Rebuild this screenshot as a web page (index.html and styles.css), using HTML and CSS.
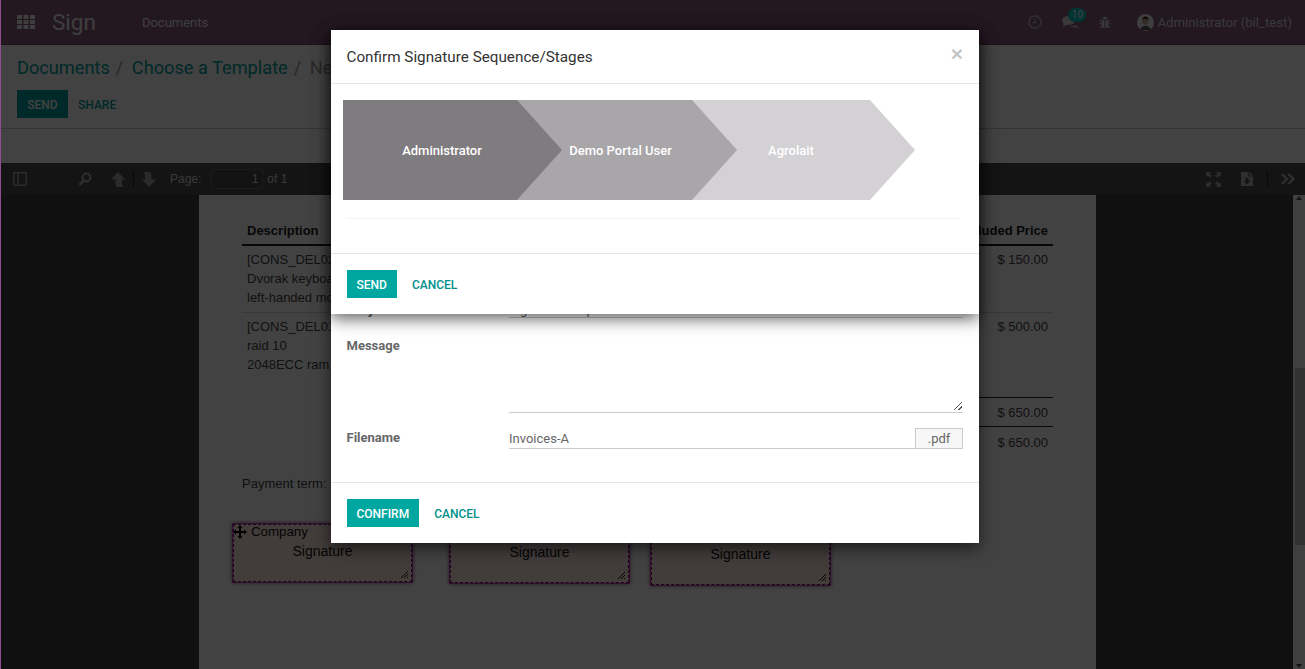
FILE: index.html
```html
<!DOCTYPE html>
<html lang="en">
<head>
    <meta charset="UTF-8">
    <title>Sign</title>
    <link rel="stylesheet" href="styles.css">
</head>
<body>
    <nav class="navbar">
        <svg class="apps-icon" width="18" height="14" viewBox="0 0 18 14">
            <rect x="0" y="0" width="5" height="4"/><rect x="6.5" y="0" width="5" height="4"/><rect x="13" y="0" width="5" height="4"/>
            <rect x="0" y="5" width="5" height="4"/><rect x="6.5" y="5" width="5" height="4"/><rect x="13" y="5" width="5" height="4"/>
            <rect x="0" y="10" width="5" height="4"/><rect x="6.5" y="10" width="5" height="4"/><rect x="13" y="10" width="5" height="4"/>
        </svg>
        <span class="brand">Sign</span>
        <span class="nav-link">Documents</span>
        <div class="nav-right">
            <svg class="nav-icon" width="14" height="14" viewBox="0 0 14 14"><circle cx="7" cy="7" r="6" fill="none" stroke="#bbb" stroke-width="1.4"/><path d="M7.4 3.5V7.6H4.6" fill="none" stroke="#bbb" stroke-width="1.2"/></svg>
            <div class="chat">
                <svg width="17" height="14" viewBox="0 0 17 14"><ellipse cx="6.5" cy="5.5" rx="6.5" ry="4.5" fill="#ddd"/><path d="M2 8L1 12L6 9Z" fill="#ddd"/><path d="M8 11.2c3 .4 5-.2 6-1.5l2.500 3.300-4-.9c-1.500.2-3.500 0-4.500-.9Z" fill="#ddd"/></svg>
                <span class="badge">10</span>
            </div>
            <svg class="nav-icon" width="12" height="13" viewBox="0 0 12 13"><path d="M3.500 3.500C3.500 1.800 4.600.8 6 .8S8.500 1.800 8.500 3.500ZM3 4.500H5.500V12.400C4 12.200 3 10.800 3 9ZM6.500 4.500H9V9C9 10.800 8 12.200 6.500 12.400Z" fill="#ddd"/><path d="M3 5.500L.8 3.800M9 5.500L11.200 3.800M3 7.800H.3M9 7.800H11.700M3.300 10L1 12M8.700 10L11 12" stroke="#ddd" stroke-width="1.100"/></svg>
            <div class="user">
                <svg width="17" height="17" viewBox="0 0 17 17"><circle cx="8.500" cy="8.500" r="8.500" fill="#f0f0f0"/><ellipse cx="8.500" cy="6.800" rx="3" ry="4" fill="#c9a48c"/><path d="M5.400 6C5.400 3.500 6.800 2.500 8.500 2.500S11.600 3.500 11.600 6C10.500 4.600 6.500 4.600 5.400 6Z" fill="#3a2c24"/><path d="M3.500 16C4 12.800 6 11.800 8.500 11.800S13 12.800 13.500 16Z" fill="#555"/></svg>
                <span>Administrator (bil_test)</span>
            </div>
        </div>
    </nav>

    <div class="control-panel">
        <ol class="breadcrumb">
            <li><a>Documents</a></li>
            <li class="sep">/</li>
            <li><a>Choose a Template</a></li>
            <li class="sep">/</li>
            <li class="current">New Document</li>
        </ol>
        <div class="cp-buttons">
            <button class="btn-primary btn-send">SEND</button>
            <button class="btn-link btn-share">SHARE</button>
        </div>
    </div>
    <div class="panel-spacer"></div>

    <div class="pdf-toolbar">
        <svg class="tb-icon tb-sidebar" width="14" height="14" viewBox="0 0 14 14"><path d="M.8.8H13.200V13.200H.8ZM5 .8V13.200" fill="none" stroke="#aaa" stroke-width="1.500"/></svg>
        <svg class="tb-icon tb-search" width="14" height="14" viewBox="0 0 14 14"><circle cx="8.500" cy="5.500" r="3.900" fill="none" stroke="#b4b4b4" stroke-width="2"/><path d="M5.600 8.500L1.500 12.800" stroke="#b4b4b4" stroke-width="2.600"/></svg>
        <svg class="tb-icon tb-up" width="14" height="15" viewBox="0 0 14 15"><path d="M7 0L14 7.500H11C10.500 10 11 12.500 12 15H5.500C4.500 12.500 4.300 10 4.500 7.500H0Z" fill="#a8a8a8"/></svg>
        <span class="tb-divider"></span>
        <svg class="tb-icon tb-down" width="14" height="15" viewBox="0 0 14 15"><path d="M2 0H8.500C9.500 2.500 9.700 5 9.500 7.500H14L7 15L0 7.500H3C3.500 5 3 2.500 2 0Z" fill="#a8a8a8"/></svg>
        <span class="tb-label tb-page">Page:</span>
        <span class="tb-input">1</span>
        <span class="tb-label">of 1</span>
        <div class="tb-right">
            <svg class="tb-icon" width="15" height="15" viewBox="0 0 15 15"><path d="M0 0H5L3.500 1.500L5.800 3.800L3.800 5.800L1.500 3.500L0 5ZM15 0V5L13.500 3.500L11.200 5.800L9.200 3.800L11.500 1.500L10 0ZM0 15V10L1.500 11.500L3.800 9.200L5.800 11.200L3.500 13.500L5 15ZM15 15H10L11.500 13.500L9.200 11.200L11.200 9.200L13.500 11.500L15 10Z" fill="#aaa"/></svg>
            <svg class="tb-icon tb-save" width="12" height="14" viewBox="0 0 12 14"><path d="M0 0H7.500V4.500H12V14H0ZM8.500 0L12 3.500H8.500Z" fill="#b4b4b4"/><path d="M4.500 6H7.500V8.800H9.500L6 12.200L2.500 8.800H4.500Z" fill="#4f4f4f"/></svg>
            <span class="tb-divider tb-divider-right"></span>
            <svg class="tb-icon" width="14" height="12" viewBox="0 0 14 12"><path d="M1 1L6 6L1 11M7.500 1L12.500 6L7.500 11" fill="none" stroke="#b4b4b4" stroke-width="2.400"/></svg>
        </div>
    </div>

    <div class="viewer">
        <div class="pdf-page">
            <div class="pdf-row pdf-head">
                <span>Description</span>
                <span>Tax Included Price</span>
            </div>
            <div class="pdf-row pdf-line">
                <span>[CONS_DEL02] Server<br>Dvorak keyboard<br>left-handed mouse</span>
                <span>$ 150.00</span>
            </div>
            <div class="pdf-row pdf-line pdf-line-last">
                <span>[CONS_DEL01] Server<br>raid 10<br>2048ECC ram</span>
                <span>$ 500.00</span>
            </div>
            <div class="pdf-total">$ 650.00</div>
            <div class="pdf-total">$ 650.00</div>
            <p class="pdf-term">Payment term: 15 Days</p>

            <div class="sign-box sign-box-1">
                <svg class="move-icon" width="14" height="14" viewBox="0 0 14 14"><path d="M7 0L9.500 3H8V6H11V4.500L14 7L11 9.500V8H8V11H9.500L7 14L4.500 11H6V8H3V9.500L0 7L3 4.500V6H6V3H4.500Z" fill="#000"/></svg>
                <span class="sign-role">Company</span>
                <span class="sign-type">Signature</span>
                <span class="grip"></span>
            </div>
            <div class="sign-box sign-box-2">
                <span class="sign-type">Signature</span>
                <span class="grip"></span>
            </div>
            <div class="sign-box sign-box-3">
                <span class="sign-type">Signature</span>
                <span class="grip"></span>
            </div>
        </div>
        <div class="scrollbar">
            <span class="arrow-up"></span>
            <span class="thumb"></span>
            <span class="arrow-down"></span>
        </div>
    </div>

    <div class="backdrop"></div>

    <div class="modal modal-back">
        <div class="modal-form">
            <div class="form-row form-row-subject">
                <label>Subject</label>
                <div class="field">Signature Request</div>
            </div>
            <div class="form-row form-row-message">
                <label>Message</label>
                <div class="field field-area"><span class="area-grip"></span></div>
            </div>
            <div class="form-row form-row-file">
                <label>Filename</label>
                <div class="field field-file">
                    <span class="file-name">Invoices-A</span>
                    <span class="file-ext">.pdf</span>
                </div>
            </div>
        </div>
        <div class="modal-footer">
            <button class="btn-primary">CONFIRM</button>
            <button class="btn-link">CANCEL</button>
        </div>
    </div>

    <div class="modal modal-front">
        <div class="modal-header">
            <h4>Confirm Signature Sequence/Stages</h4>
            <span class="close">×</span>
        </div>
        <div class="modal-body">
            <div class="stages">
                <div class="stage stage-1">Administrator</div>
                <div class="stage stage-2">Demo Portal User</div>
                <div class="stage stage-3">Agrolait</div>
            </div>
            <div class="stages-rule"></div>
        </div>
        <div class="modal-footer">
            <button class="btn-primary">SEND</button>
            <button class="btn-link">CANCEL</button>
        </div>
    </div>
</body>
</html>
```

FILE: styles.css
```css
* {
    box-sizing: border-box;
}

html, body {
    height: 100%;
}

body {
    margin: 0;
    overflow: hidden;
    display: flex;
    flex-direction: column;
    border-left: 1px solid #8e4f8e;
    background-color: #fff;
    font-family: Roboto, "Liberation Sans", sans-serif;
    font-size: 13px;
}

button {
    font-family: inherit;
    border: none;
    cursor: pointer;
}

/* Barra superior */
.navbar {
    flex: none;
    display: flex;
    align-items: center;
    height: 45px;
    padding-left: 16px;
    background-color: #875a7b;
    border-bottom: 1px solid #6f4a66;
    color: #f0f0f0;
}

.apps-icon {
    fill: #f0f0f0;
    margin-right: 17px;
}

.brand {
    font-size: 22.5px;
    margin-right: 46px;
}

.nav-right {
    margin-left: auto;
    display: flex;
    align-items: center;
    padding-right: 13px;
}

.nav-icon {
    flex: none;
}

.chat {
    position: relative;
    display: flex;
    margin: 0 20px;
}

.badge {
    position: absolute;
    top: -7px;
    left: 6px;
    width: 18px;
    height: 14px;
    border-radius: 7px;
    background-color: #00c8c0;
    color: #fff;
    font-size: 10px;
    line-height: 14px;
    text-align: center;
}

.user {
    display: flex;
    align-items: center;
    gap: 3px;
    margin-left: 26px;
    font-size: 13.2px;
    color: #ddd;
}

/* Painel de controle */
.control-panel {
    flex: none;
    height: 84px;
    padding: 11px 16px 0;
    border-bottom: 1px solid #ccc;
}

.breadcrumb {
    display: flex;
    margin: 0;
    padding: 0;
    list-style: none;
    font-size: 18.2px;
    line-height: 24px;
}

.breadcrumb a {
    color: #00a09d;
}

.breadcrumb .sep {
    color: #999;
    margin: 0 8.500px 0 6px;
}

.breadcrumb .current {
    color: #999;
}

.cp-buttons {
    display: flex;
    align-items: center;
    margin-top: 10px;
}

.panel-spacer {
    flex: none;
    height: 34px;
}

/* Barra do visualizador */
.pdf-toolbar {
    flex: none;
    display: flex;
    align-items: center;
    height: 32px;
    background-color: #4f4f4f;
    padding-left: 12px;
    color: #d9d9d9;
    font-family: "Liberation Sans", sans-serif;
    font-size: 12px;
}

.tb-icon {
    flex: none;
}

.tb-search {
    margin-left: 51px;
}

.tb-up {
    margin-left: 19px;
}

.tb-divider {
    width: 1px;
    height: 16px;
    margin: 0 8px;
    background-color: #222;
}

.tb-page {
    margin-left: 14px;
}

.tb-input {
    width: 52px;
    height: 20px;
    margin: 0 4px 0 10px;
    padding-right: 4px;
    border: 1px solid #6a6a6a;
    border-radius: 2px;
    background-color: #4a4a4a;
    text-align: right;
    line-height: 18px;
}

.tb-right {
    margin-left: auto;
    display: flex;
    align-items: center;
    padding-right: 10px;
}

.tb-save {
    margin-left: 20px;
}

.tb-divider-right {
    margin: 0 13px 0 14px;
}

/* Visualizador */
.viewer {
    flex: 1;
    position: relative;
    min-height: 0;
    background-color: #404040;
}

.pdf-page {
    position: absolute;
    top: 0;
    bottom: 0;
    left: 198px;
    width: 897px;
    padding: 26px 43px 0;
    background-color: #fff;
    font-family: "Liberation Sans", sans-serif;
    font-size: 13px;
    line-height: 19px;
    color: #444;
}

.pdf-row {
    display: flex;
    justify-content: space-between;
    padding: 0 5px;
}

.pdf-head {
    height: 25px;
    border-bottom: 2px solid #222;
    font-weight: bold;
    color: #222;
}

.pdf-line {
    height: 67px;
    padding-top: 4px;
    border-bottom: 1px solid #d8d8d8;
}

.pdf-line-last {
    height: 84px;
    border-bottom: none;
}

/* Os totais ocupam so a metade direita da tabela */
.pdf-total {
    width: 50%;
    height: 29px;
    margin-left: auto;
    padding: 5px 5px 0;
    text-align: right;
    border-top: 1px solid #222;
}

.pdf-total + .pdf-total {
    padding-top: 6px;
}

.pdf-term {
    margin: 19px 0 0;
}

/* Caixas de assinatura */
.sign-box {
    position: absolute;
    width: 179px;
    height: 58px;
    border: 1px dashed #5a1a55;
    background-color: #ffe8e3;
    box-shadow: 0 0 0 1px #c832be, 0 0 4px 1px #875a7b;
    font-size: 14px;
    line-height: 16px;
    text-align: center;
    color: #111;
}

.sign-box-1 {
    top: 329px;
    left: 34px;
}

.sign-box-2 {
    top: 330px;
    left: 251px;
}

.sign-box-3 {
    top: 332px;
    left: 452px;
}

.sign-type {
    display: block;
    margin-top: 18px;
}

.sign-box-1 .sign-type {
    margin-top: 3px;
}

.sign-role {
    display: block;
    margin-top: -1px;
    padding-left: 17px;
    text-align: left;
    font-size: 13.3px;
}

.move-icon {
    position: absolute;
    top: 0;
    left: -1px;
}

.grip {
    position: absolute;
    right: 3px;
    bottom: 3px;
    width: 8px;
    height: 8px;
    background: repeating-linear-gradient(135deg, #111 0 1px, transparent 1px 2px);
    clip-path: polygon(100% 0, 100% 100%, 0 100%);
}

.scrollbar {
    position: absolute;
    top: 0;
    right: 0;
    bottom: 0;
    width: 12px;
    background-color: #f1f1f1;
}

.thumb {
    position: absolute;
    top: 173px;
    left: 2px;
    width: 10px;
    height: 177px;
    background-color: #c1c1c1;
}

.arrow-up, .arrow-down {
    position: absolute;
    left: 3px;
    border-left: 3.500px solid transparent;
    border-right: 3.500px solid transparent;
}

.arrow-up {
    top: 1px;
    border-bottom: 4px solid #505050;
}

.arrow-down {
    bottom: 1px;
    border-top: 4px solid #505050;
}

/* Fundo escurecido e modais */
.backdrop {
    position: absolute;
    top: 0;
    right: 0;
    bottom: 0;
    left: 1px;
    background-color: rgba(0, 0, 0, 0.74);
}

.modal {
    position: absolute;
    top: 30px;
    left: 331px;
    width: 648px;
    display: flex;
    flex-direction: column;
    background-color: #fff;
    box-shadow: 0 5px 15px rgba(0, 0, 0, 0.6);
}

.modal-back {
    height: 513px;
}

.modal-front {
    height: 284px;
}

.modal-header {
    position: relative;
    height: 54px;
    padding: 18px 16px 0 15.500px;
    border-bottom: 1px solid #e5e5e5;
}

.modal-header h4 {
    margin: 0;
    font-size: 15.25px;
    font-weight: 400;
    line-height: 18px;
    color: #333;
}

.close {
    position: absolute;
    top: 12px;
    right: 16px;
    color: #c5c5c5;
    font-family: "Liberation Sans", sans-serif;
    font-size: 21px;
    font-weight: bold;
    line-height: 24px;
}

.modal-body {
    flex: 1;
    padding: 16px 12px 0;
}

.stages {
    display: flex;
    height: 100px;
}

.stage {
    display: flex;
    align-items: center;
    justify-content: center;
    height: 100%;
    color: #fff;
    font-size: 13px;
    font-weight: 500;
}

.stage-1 {
    position: relative;
    z-index: 2;
    width: 219px;
    padding-right: 21px;
    background-color: #7f7c7f;
    clip-path: polygon(0 0, 174px 0, 100% 50%, 174px 100%, 0 100%);
}

.stage-2 {
    position: relative;
    z-index: 1;
    width: 220px;
    margin-left: -45px;
    padding-right: 13px;
    background-color: #a8a6a8;
    clip-path: polygon(0 0, 175px 0, 100% 50%, 175px 100%, 0 100%);
}

.stage-3 {
    width: 223px;
    margin-left: -45px;
    padding-right: 25px;
    background-color: #d3d1d4;
    clip-path: polygon(0 0, 178px 0, 100% 50%, 178px 100%, 0 100%);
}

.stages-rule {
    margin: 18px 7px 0 4px;
    border-top: 1px solid #f4f4f4;
}

.modal-footer {
    flex: none;
    display: flex;
    align-items: center;
    height: 61px;
    padding: 0 16px;
    border-top: 1px solid #e5e5e5;
}

.btn-primary {
    height: 28px;
    padding: 2px 10px 0 9.500px;
    background-color: #00a7a0;
    color: #fff;
    font-size: 12px;
    font-weight: 500;
}

.btn-link {
    height: 28px;
    margin-left: 5px;
    padding: 2px 10px 0;
    background: none;
    color: #00908c;
    font-size: 12px;
    font-weight: 500;
}

.btn-send {
    width: 51px;
    padding: 1px 0 0;
    background-color: #00a09d;
}

.btn-share {
    margin-left: 0;
    padding-top: 1px;
    color: #00a09d;
}

/* Formulario do modal de tras */
.modal-form {
    flex: 1;
    display: flex;
    flex-direction: column;
    justify-content: flex-end;
    padding: 0 16px 33px 15.500px;
    color: #666;
}

.form-row {
    display: flex;
}

.form-row label {
    flex: none;
    width: 162.500px;
    font-weight: 700;
}

.field {
    flex: 1;
    border-bottom: 1px solid #ccc;
}

.form-row-message label {
    padding-top: 20px;
}

.field-area {
    position: relative;
    height: 95px;
}

.area-grip {
    position: absolute;
    right: 1px;
    bottom: 2px;
    width: 8px;
    height: 8px;
    background: linear-gradient(135deg, transparent 45%, #555 45% 55%, transparent 55% 72%, #555 72% 82%, transparent 82%);
}

.form-row-file {
    margin-top: 15px;
    align-items: center;
}

.form-row-file label {
    margin-top: -2px;
}

.field-file {
    display: flex;
    justify-content: space-between;
    align-items: flex-end;
    height: 21px;
}

.file-name {
    line-height: 19px;
}

.file-ext {
    width: 48px;
    height: 21px;
    margin-bottom: -1px;
    border: 1px solid #ccc;
    background-color: #f7f7f7;
    text-align: center;
    line-height: 19px;
}
```
